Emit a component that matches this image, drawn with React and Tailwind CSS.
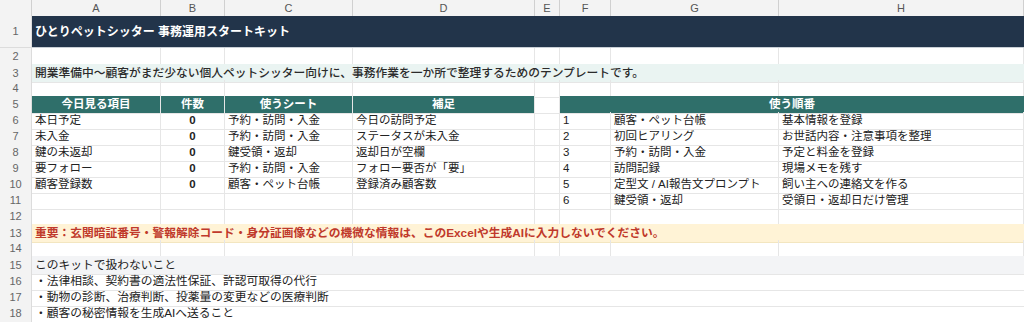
import React from 'react';

const GRID = "grid grid-cols-[32px_129px_64px_128px_182px_25px_51px_168px_1fr]";
const FONT = "font-['Liberation_Sans','Noto_Sans_CJK_JP',sans-serif]";

function Row({ n, h = "h-[16px]", children }) {
  return (
    <div className={`${GRID} ${h}`}>
      <div className="flex items-center justify-center border-r border-b border-[#dcdcdc] bg-[#f3f3f3] text-[11px] text-[#666]">{n}</div>
      {children}
    </div>
  );
}

function C({ children, className = "" }) {
  return (
    <div className={`flex items-center overflow-hidden whitespace-nowrap border-r border-b border-[#e6e6e6] px-[3px] text-[11.5px] text-[#222] ${className}`}>
      {children}
    </div>
  );
}

function Blank() {
  return (
    <>
      <C /><C /><C /><C /><C /><C /><C /><C />
    </>
  );
}

const today = [
  ["本日予定", "予約・訪問・入金", "今日の訪問予定"],
  ["未入金", "予約・訪問・入金", "ステータスが未入金"],
  ["鍵の未返却", "鍵受領・返却", "返却日が空欄"],
  ["要フォロー", "予約・訪問・入金", "フォロー要否が「要」"],
  ["顧客登録数", "顧客・ペット台帳", "登録済み顧客数"],
];

const steps = [
  ["1", "顧客・ペット台帳", "基本情報を登録"],
  ["2", "初回ヒアリング", "お世話内容・注意事項を整理"],
  ["3", "予約・訪問・入金", "予定と料金を登録"],
  ["4", "訪問記録", "現場メモを残す"],
  ["5", "定型文 / AI報告文プロンプト", "飼い主への連絡文を作る"],
  ["6", "鍵受領・返却", "受領日・返却日だけ管理"],
];

export default function App() {
  return (
    <div className={`h-[322px] w-[1024px] overflow-hidden bg-white ${FONT}`}>
      {/* column letters */}
      <div className={`${GRID} h-[16px] bg-[#f3f3f3] text-[11px] text-[#555]`}>
        <div className="border-r border-b border-[#d0d0d0]" />
        {["A", "B", "C", "D", "E", "F", "G", "H"].map((l) => (
          <div key={l} className="flex items-center justify-center border-r border-b border-[#d0d0d0]">{l}</div>
        ))}
      </div>

      <Row n="1" h="h-[32px]">
        <div className="col-span-8 flex items-center border-b border-[#c9cfd6] bg-[#22344a] px-[3px] text-[12px] font-bold text-white">
          ひとりペットシッター 事務運用スタートキット
        </div>
      </Row>

      <Row n="2"><Blank /></Row>

      <Row n="3">
        <div className="col-span-8 flex items-center border-b border-[#e6e6e6] bg-[#eaf4f2] px-[3px] text-[11.75px] font-medium text-[#2b2b2b]">
          開業準備中〜顧客がまだ少ない個人ペットシッター向けに、事務作業を一か所で整理するためのテンプレートです。
        </div>
      </Row>

      <Row n="4"><Blank /></Row>

      <Row n="5">
        <C className="justify-center border-[#2f6f6a] bg-[#2f6f6a] font-bold text-white">今日見る項目</C>
        <C className="justify-center border-[#2f6f6a] bg-[#2f6f6a] font-bold text-white">件数</C>
        <C className="justify-center border-[#2f6f6a] bg-[#2f6f6a] font-bold text-white">使うシート</C>
        <C className="justify-center bg-[#2f6f6a] font-bold text-white">補足</C>
        <C />
        <div className="col-span-3 flex items-center justify-center border-b border-[#e6e6e6] bg-[#2f6f6a] text-[11.5px] font-bold text-white">使う順番</div>
      </Row>

      {[0, 1, 2, 3, 4, 5].map((i) => {
        const t = today[i];
        const s = steps[i];
        return (
          <Row key={i} n={String(i + 6)}>
            <C>{t ? t[0] : ""}</C>
            <C className="justify-center font-bold">{t ? "0" : ""}</C>
            <C>{t ? t[1] : ""}</C>
            <C>{t ? t[2] : ""}</C>
            <C />
            <C>{s[0]}</C>
            <C>{s[1]}</C>
            <C>{s[2]}</C>
          </Row>
        );
      })}

      <Row n="12"><Blank /></Row>

      <Row n="13">
        <div className="col-span-8 flex items-center border-b border-[#f3e6c0] bg-[#fff3d6] px-[3px] text-[11.75px] font-bold text-[#c0392b]">
          重要：玄関暗証番号・警報解除コード・身分証画像などの機微な情報は、このExcelや生成AIに入力しないでください。
        </div>
      </Row>

      <Row n="14"><Blank /></Row>

      <Row n="15">
        <div className="col-span-8 flex items-center border-b border-[#e6e6e6] bg-[#f3f4f6] px-[3px] text-[11.75px] text-[#222]">
          このキットで扱わないこと
        </div>
      </Row>

      {[
        "・法律相談、契約書の適法性保証、許認可取得の代行",
        "・動物の診断、治療判断、投薬量の変更などの医療判断",
        "・顧客の秘密情報を生成AIへ送ること",
      ].map((line, i) => (
        <Row key={line} n={String(i + 16)} h={i === 2 ? "h-[18px]" : "h-[16px]"}>
          <div className="col-span-8 flex items-center border-b border-[#e6e6e6] px-[3px] text-[11.75px] text-[#222]">{line}</div>
        </Row>
      ))}
    </div>
  );
}
